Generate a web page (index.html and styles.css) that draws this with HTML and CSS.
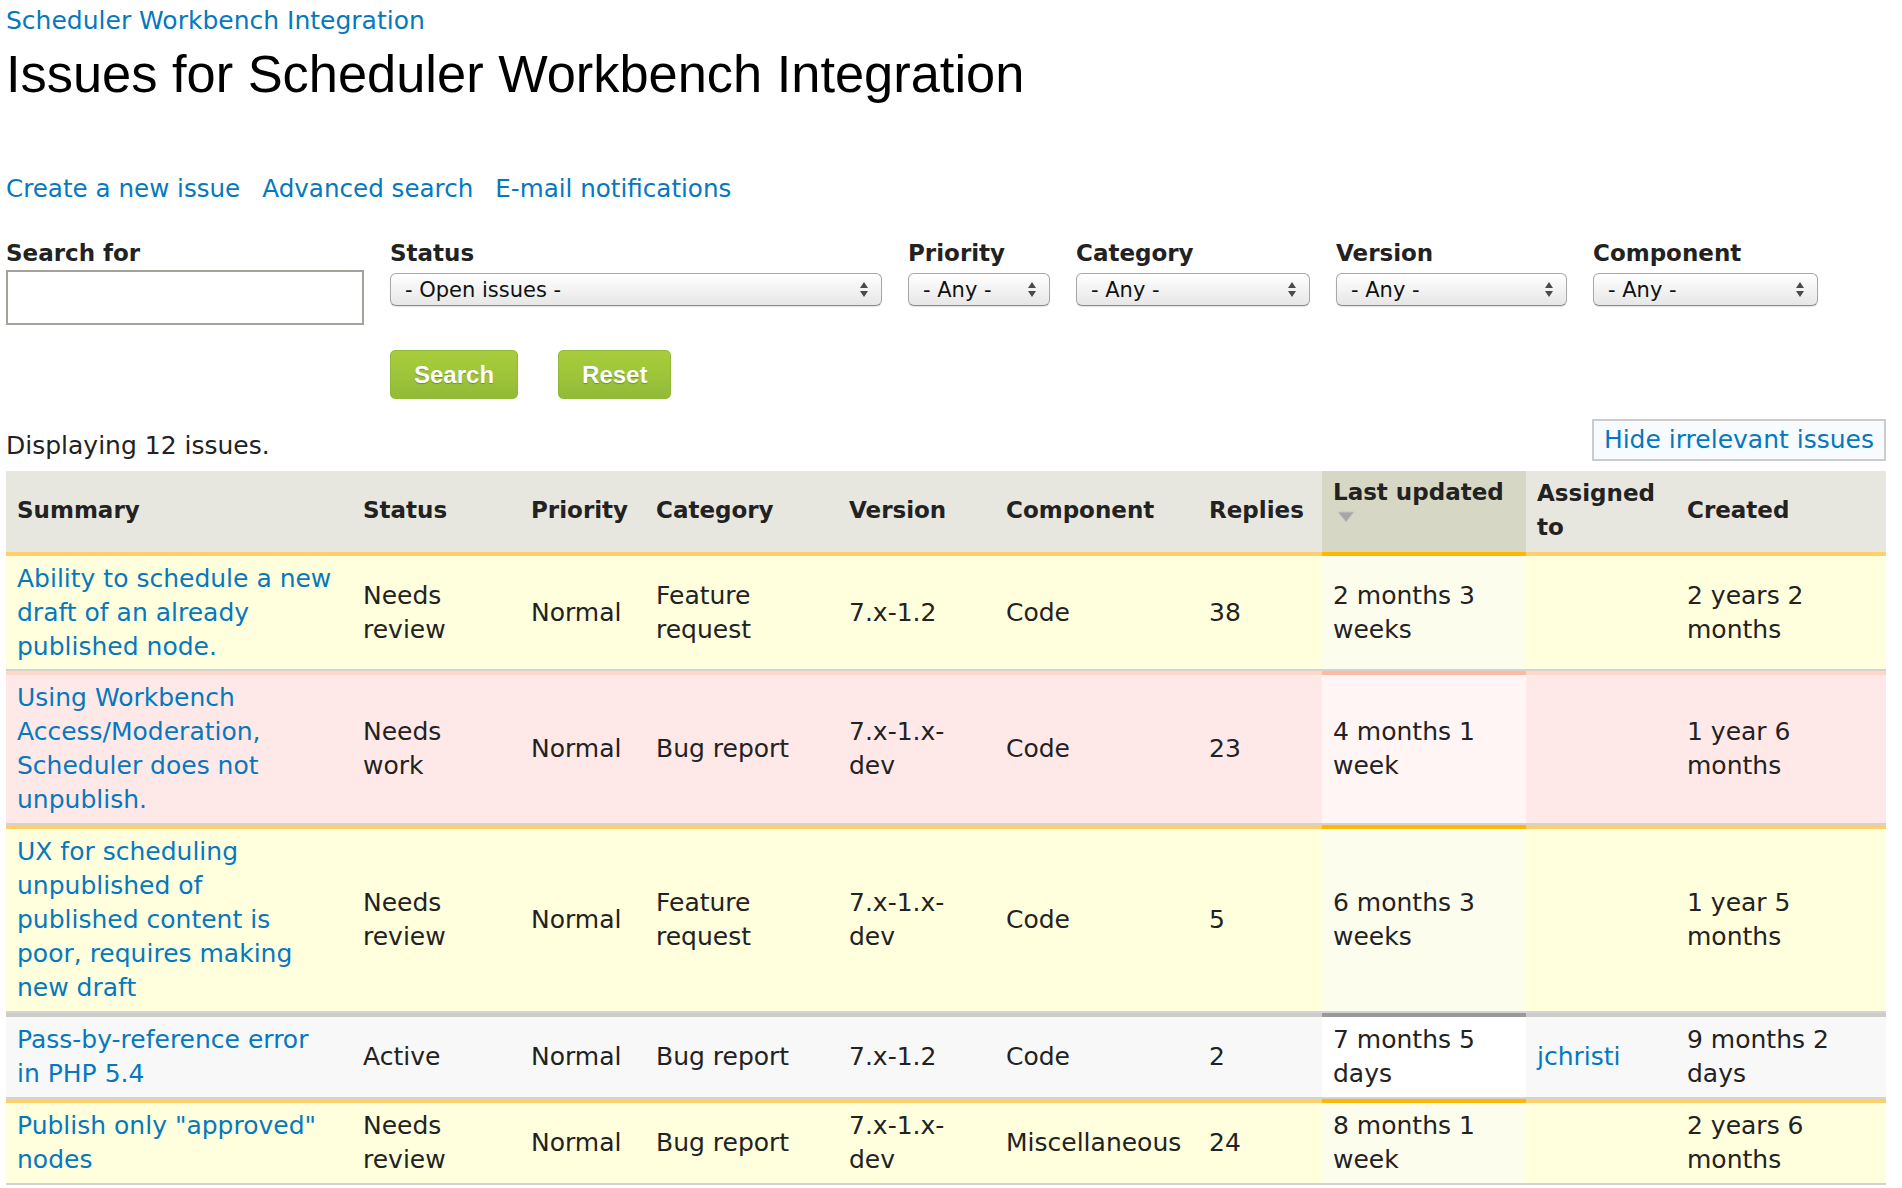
FILE: index.html
```html
<!DOCTYPE html>
<html lang="en">
<head>
<meta charset="utf-8">
<title>Issues for Scheduler Workbench Integration</title>
<link rel="stylesheet" href="styles.css">
</head>
<body>
<div class="page">
  <div class="breadcrumb"><a href="#">Scheduler Workbench Integration</a></div>
  <h1 class="title">Issues for Scheduler Workbench Integration</h1>

  <ul class="links">
    <li><a href="#">Create a new issue</a></li>
    <li><a href="#">Advanced search</a></li>
    <li><a href="#">E-mail notifications</a></li>
  </ul>

  <form class="filters">
    <div class="filter">
      <label class="filter-label">Search for</label>
      <input class="text-input" type="text">
    </div>
    <div class="filter">
      <label class="filter-label">Status</label>
      <div class="select"><select><option>- Open issues -</option></select><svg class="arrows" width="8" height="15" viewBox="0 0 8 15"><path d="M4 0L8 6H0Z M0 9H8L4 15Z" fill="#4a4a4a"/></svg></div>
    </div>
    <div class="filter">
      <label class="filter-label">Priority</label>
      <div class="select"><select><option>- Any -</option></select><svg class="arrows" width="8" height="15" viewBox="0 0 8 15"><path d="M4 0L8 6H0Z M0 9H8L4 15Z" fill="#4a4a4a"/></svg></div>
    </div>
    <div class="filter">
      <label class="filter-label">Category</label>
      <div class="select"><select><option>- Any -</option></select><svg class="arrows" width="8" height="15" viewBox="0 0 8 15"><path d="M4 0L8 6H0Z M0 9H8L4 15Z" fill="#4a4a4a"/></svg></div>
    </div>
    <div class="filter">
      <label class="filter-label">Version</label>
      <div class="select"><select><option>- Any -</option></select><svg class="arrows" width="8" height="15" viewBox="0 0 8 15"><path d="M4 0L8 6H0Z M0 9H8L4 15Z" fill="#4a4a4a"/></svg></div>
    </div>
    <div class="filter">
      <label class="filter-label">Component</label>
      <div class="select"><select><option>- Any -</option></select><svg class="arrows" width="8" height="15" viewBox="0 0 8 15"><path d="M4 0L8 6H0Z M0 9H8L4 15Z" fill="#4a4a4a"/></svg></div>
    </div>
    <div class="actions">
      <button type="button" class="btn">Search</button>
      <button type="button" class="btn">Reset</button>
    </div>
  </form>

  <div class="results-bar">
    <div class="count">Displaying 12 issues.</div>
    <a href="#" class="hide-link">Hide irrelevant issues</a>
  </div>

  <table class="issues">
    <colgroup>
      <col class="c-summary"><col class="c-status"><col class="c-priority"><col class="c-category"><col class="c-version"><col class="c-component"><col class="c-replies"><col class="c-updated"><col class="c-assigned"><col class="c-created">
    </colgroup>
    <thead>
      <tr>
        <th>Summary</th><th>Status</th><th>Priority</th><th>Category</th><th>Version</th><th>Component</th><th>Replies</th>
        <th class="sorted">Last updated<span class="sort-icon"><svg width="18" height="12" viewBox="0 0 18 12"><path d="M1 1H17L9 11Z" fill="#a6a6a6" stroke="#c4c4c4" stroke-width="1"/></svg></span></th>
        <th>Assigned to</th><th>Created</th>
      </tr>
    </thead>
    <tbody>
      <tr class="st-review">
        <td><a href="#">Ability to schedule a new draft of an already published node.</a></td>
        <td>Needs review</td><td>Normal</td><td>Feature request</td><td>7.x-1.2</td><td>Code</td><td>38</td>
        <td class="sorted">2 months 3 weeks</td><td></td><td>2 years 2 months</td>
      </tr>
      <tr class="st-work">
        <td><a href="#">Using Workbench Access/Moderation, Scheduler does not unpublish.</a></td>
        <td>Needs work</td><td>Normal</td><td>Bug report</td><td>7.x-1.x-dev</td><td>Code</td><td>23</td>
        <td class="sorted">4 months 1 week</td><td></td><td>1 year 6 months</td>
      </tr>
      <tr class="st-review">
        <td><a href="#">UX for scheduling unpublished of<br>published content is poor, requires making new draft</a></td>
        <td>Needs review</td><td>Normal</td><td>Feature request</td><td>7.x-1.x-dev</td><td>Code</td><td>5</td>
        <td class="sorted">6 months 3 weeks</td><td></td><td>1 year 5 months</td>
      </tr>
      <tr class="st-active">
        <td><a href="#">Pass-by-reference error in PHP 5.4</a></td>
        <td>Active</td><td>Normal</td><td>Bug report</td><td>7.x-1.2</td><td>Code</td><td>2</td>
        <td class="sorted">7 months 5 days</td><td><a href="#">jchristi</a></td><td>9 months 2 days</td>
      </tr>
      <tr class="st-review">
        <td><a href="#">Publish only "approved" nodes</a></td>
        <td>Needs review</td><td>Normal</td><td>Bug report</td><td>7.x-1.x-dev</td><td>Miscellaneous</td><td>24</td>
        <td class="sorted">8 months 1 week</td><td></td><td>2 years 6 months</td>
      </tr>
    </tbody>
  </table>
</div>
</body>
</html>
```
FILE: styles.css
```css
html, body {
  margin: 0;
  padding: 0;
  background: #fff;
}

body {
  font-family: "DejaVu Sans", "Liberation Sans", sans-serif;
  font-size: 25px;
  line-height: 34px;
  color: #222;
}

a {
  color: #0678be;
  text-decoration: none;
}

.page {
  padding: 4px 16px 0 6px;
}

.breadcrumb {
  height: 34px;
}

.title {
  margin: 6px 0 0;
  font-family: "Liberation Sans", Arial, sans-serif;
  font-weight: normal;
  font-size: 52.4px;
  line-height: 60px;
  color: #000;
}

.links {
  list-style: none;
  margin: 68px 0 0;
  padding: 0;
  display: flex;
  gap: 22px;
  font-size: 24.6px;
}

.filters {
  margin-top: 30px;
  display: grid;
  grid-template-columns: 358px 492px 142px 234px 231px 225px;
  column-gap: 26px;
  row-gap: 25px;
  align-items: start;
}

.filter {
  display: flex;
  flex-direction: column;
}

.filter-label {
  font-weight: bold;
  font-size: 23px;
  line-height: 34px;
  color: #222;
}

.text-input {
  box-sizing: border-box;
  width: 358px;
  height: 55px;
  border: 2px solid #a3a39c;
  background: #fff;
  margin: 0;
  padding: 4px 8px;
  font: 25px "DejaVu Sans", sans-serif;
}

.select {
  box-sizing: border-box;
  margin-top: 3px;
  height: 33px;
  display: flex;
  align-items: center;
  border: 1px solid #a8a8a8;
  border-bottom-color: #8e8e8e;
  border-radius: 6px;
  background: linear-gradient(#ffffff, #f3f3f3 50%, #e6e6e6);
  box-shadow: 0 1px 1px rgba(0, 0, 0, 0.12);
  padding-right: 13px;
}

.select select {
  appearance: none;
  -webkit-appearance: none;
  flex: 1;
  min-width: 0;
  height: 100%;
  border: 0;
  background: transparent;
  padding: 0 0 0 14px;
  margin: 0;
  font-family: "DejaVu Sans", sans-serif;
  font-size: 21px;
  color: #111;
}

.arrows {
  flex: none;
}

.actions {
  grid-column: 2 / -1;
  display: flex;
  gap: 40px;
}

.btn {
  height: 49px;
  padding: 0 23px;
  border: 1px solid #93ba37;
  border-radius: 5px;
  background: linear-gradient(#a8cc3c, #9ec53a 50%, #92ba37);
  color: #fff;
  font-family: "Liberation Sans", Arial, sans-serif;
  font-weight: bold;
  font-size: 24px;
  text-shadow: 0 1px 1px rgba(60, 80, 0, 0.45);
  cursor: pointer;
}

.results-bar {
  margin-top: 20px;
  display: flex;
  justify-content: space-between;
  align-items: flex-end;
}

.count {
  margin-bottom: -2px;
}

.hide-link {
  display: block;
  border: 2px solid #cccccc;
  background: #f8fbfe;
  padding: 2px 10px;
}

.issues {
  margin-top: 10px;
  width: 100%;
  table-layout: fixed;
  border-collapse: separate;
  border-spacing: 0;
}

.c-summary { width: 346px; }
.c-status { width: 168px; }
.c-priority { width: 125px; }
.c-category { width: 193px; }
.c-version { width: 157px; }
.c-component { width: 203px; }
.c-replies { width: 124px; }
.c-updated { width: 204px; }
.c-assigned { width: 150px; }
.c-created { width: 210px; }

.issues th {
  background: #e8e7df;
  text-align: left;
  font-weight: bold;
  font-size: 23px;
  line-height: 34px;
  color: #222;
  padding: 4px 8px 7px 11px;
  vertical-align: middle;
}

.issues th.sorted {
  background: #d7d7c5;
  vertical-align: top;
}

.sort-icon {
  display: block;
  height: 34px;
  padding-left: 4px;
}

.sort-icon svg {
  display: block;
  margin-top: 2px;
}

.issues td {
  padding: 6px 14px 6px 11px;
  vertical-align: middle;
  border-top: 4px solid transparent;
  border-bottom: 2px solid #d3d3d3;
}

.issues tr:first-child td {
  padding-bottom: 5px;
}

.st-review td {
  background: #ffffdd;
  border-top-color: #ffcf6c;
}

.st-review td.sorted {
  background: #fdfdee;
  border-top-color: #ffb800;
}

.st-work td {
  background: #ffe9e8;
  border-top-color: #ffd8cb;
}

.st-work td.sorted {
  background: #fff5f4;
  border-top-color: #ffb8a2;
}

.st-active td {
  background: #f8f8f8;
  border-top-color: #cccccc;
}

.st-active td.sorted {
  background: #ffffff;
  border-top-color: #999999;
}
```
